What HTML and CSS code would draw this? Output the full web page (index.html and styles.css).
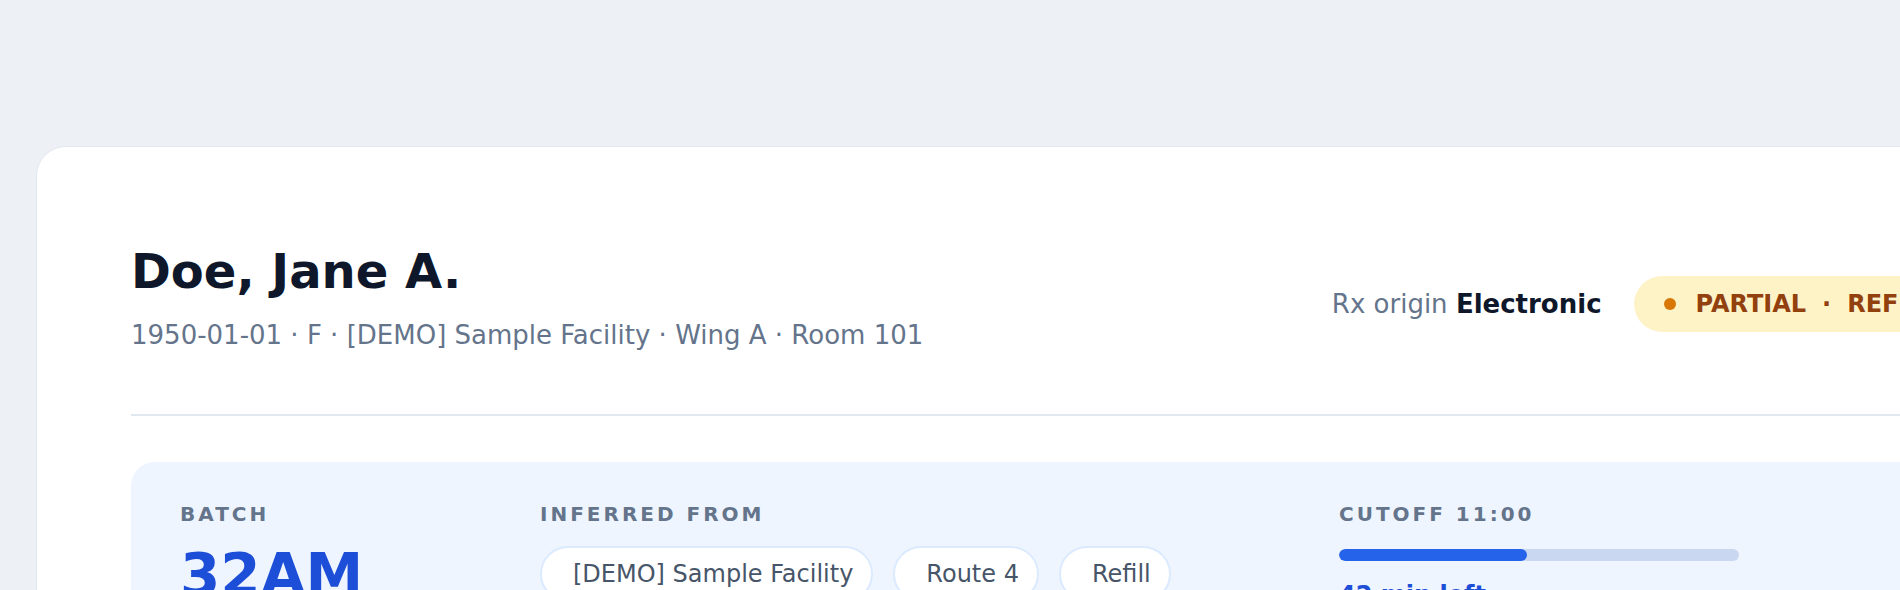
FILE: index.html
```html
<!DOCTYPE html>
<html lang="en">
<head>
<meta charset="utf-8">
<title>Batch assignment</title>
<link rel="stylesheet" href="styles.css">
</head>
<body>
<div class="page">
  <section class="card">
    <header class="header">
      <div class="who">
        <h1 class="name">Doe, Jane A.</h1>
        <p class="meta">1950-01-01 · F · [DEMO] Sample Facility · Wing A · Room 101</p>
      </div>
      <div class="status">
        <span class="origin">Rx origin <b>Electronic</b></span>
        <span class="badge"><span class="dot"></span><span class="badge-text">PARTIAL<span class="sep">·</span>REFILL</span></span>
      </div>
    </header>
    <div class="panel">
      <div class="col">
        <div class="label">BATCH</div>
        <div class="batch">32AM</div>
      </div>
      <div class="col">
        <div class="label">INFERRED FROM</div>
        <div class="pills">
          <span class="pill">[DEMO] Sample Facility</span>
          <span class="pill">Route 4</span>
          <span class="pill">Refill</span>
        </div>
      </div>
      <div class="col">
        <div class="label">CUTOFF 11:00</div>
        <div class="track"><div class="fill" style="width:47%"></div></div>
        <div class="left">42 min left</div>
      </div>
    </div>
  </section>
</div>
</body>
</html>
```
FILE: styles.css
```css
html, body {
  margin: 0;
  padding: 0;
  overflow: hidden;
  background: #edf1f6;
  font-family: "DejaVu Sans", "Liberation Sans", sans-serif;
}
.page {
  padding: 146px 0 0 36px;
  width: 2100px;
}
.card {
  box-sizing: border-box;
  width: 2027px;
  min-height: 700px;
  background: #ffffff;
  border: 1px solid #e2e8f0;
  border-radius: 30px;
  padding: 96px 94px;
}
.header {
  display: flex;
  justify-content: space-between;
  align-items: center;
  padding-bottom: 61px;
  border-bottom: 2px solid #e2e8f0;
}
.name {
  margin: 0;
  font-size: 48px;
  line-height: 1.2;
  font-weight: 700;
  color: #0f172a;
}
.meta {
  margin: 16px 0 0;
  font-size: 26px;
  line-height: 1.4;
  color: #64748b;
}
.status {
  display: flex;
  align-items: center;
  gap: 32px;
  height: 56px;
  margin-top: 12px;
}
.origin {
  font-size: 26px;
  color: #64748b;
}
.origin b {
  color: #0f172a;
  font-weight: 700;
}
.badge {
  display: inline-flex;
  align-items: center;
  gap: 20px;
  height: 56px;
  padding: 0 30px;
  border-radius: 28px;
  background: #fef3c7;
  color: #92400e;
  font-size: 24px;
  font-weight: 700;
  white-space: nowrap;
}
.sep {
  margin: 0 16px;
}
.dot {
  width: 12px;
  height: 12px;
  border-radius: 50%;
  background: #d97706;
}
.panel {
  margin-top: 46px;
  background: #eef5ff;
  border-radius: 24px;
  padding: 40px 49px;
  display: grid;
  grid-template-columns: 320px 759px 1fr;
  column-gap: 40px;
  min-height: 300px;
}
.label {
  font-size: 20px;
  line-height: 24px;
  font-weight: 700;
  letter-spacing: 3px;
  color: #64748b;
}
.batch {
  margin-top: 20px;
  font-size: 58px;
  line-height: 1;
  font-weight: 700;
  color: #1d4ed8;
}
.pills {
  margin-top: 20px;
  display: flex;
  gap: 20px;
}
.pill {
  display: inline-flex;
  align-items: center;
  box-sizing: border-box;
  height: 56px;
  padding: 0 18px 0 31px;
  border: 2px solid #dbeafe;
  border-radius: 28px;
  background: #ffffff;
  color: #475569;
  font-size: 24px;
}
.track {
  margin-top: 23px;
  width: 400px;
  height: 12px;
  border-radius: 6px;
  background: #c9d8f0;
  overflow: hidden;
}
.fill {
  height: 100%;
  border-radius: 6px;
  background: #2563eb;
}
.left {
  margin-top: 20px;
  font-size: 24px;
  line-height: 1.2;
  font-weight: 700;
  color: #1d4ed8;
}
```
